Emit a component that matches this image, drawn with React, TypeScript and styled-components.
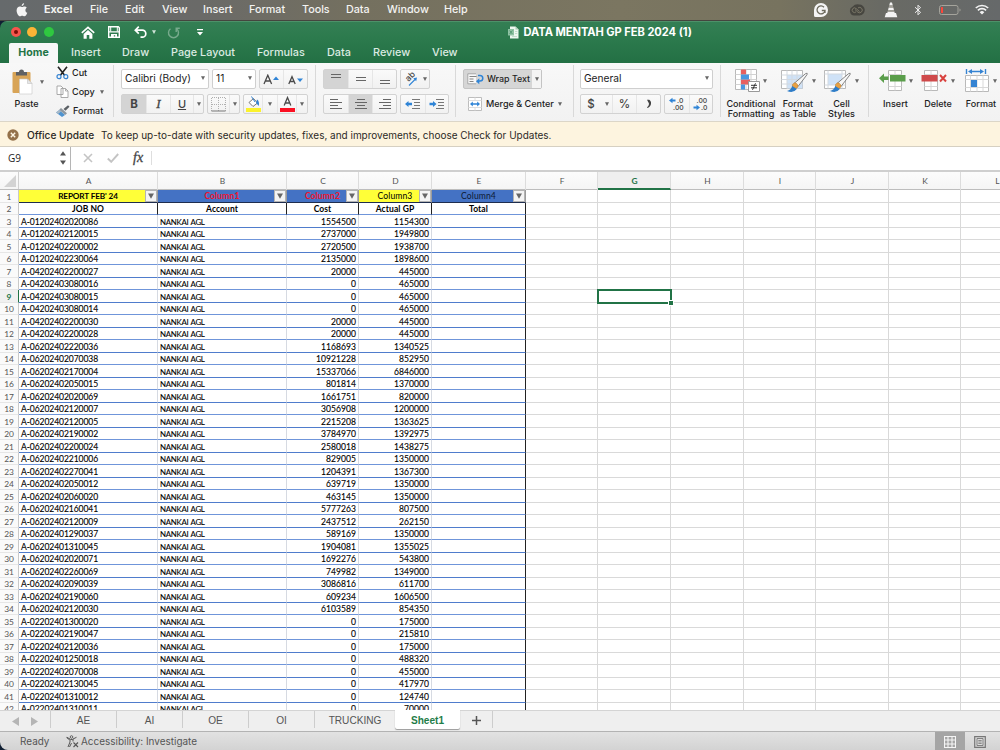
import React from "react";
import styled, { createGlobalStyle, css } from "styled-components";

const GlobalStyle = createGlobalStyle`
  * { box-sizing: border-box; }
  body { margin: 0; overflow: hidden; background: #101f33; }
  svg { display: block; flex: none; }
`;

const ui = `Inter, "Liberation Sans", sans-serif`;
const sheet = `Lato, "Open Sans", sans-serif`;

const Desktop = styled.div`
  width: 1000px;
  height: 750px;
  overflow: hidden;
  display: flex;
  flex-direction: column;
  font-family: ${ui};
  color: #1c1c1c;
  white-space: nowrap;
`;

/* ---------- system menu bar ---------- */

const MenuBar = styled.header`
  height: 21px;
  flex: none;
  display: flex;
  align-items: center;
  justify-content: space-between;
  padding: 0 11px 1px 16px;
  background: linear-gradient(90deg, #666a6c 0%, #6a6a68 20%, #74705f 36%, #7b7661 62%, #77735f 78%, #696a64 88%, #66696a 100%);
  border-bottom: 1px solid #45453f;
`;
const MenuLeft = styled.nav`
  display: flex;
  align-items: center;
`;
const MenuItem = styled.span<{ $w: number; $bold?: boolean }>`
  width: ${(p) => p.$w}px;
  font-size: 10.8px;
  letter-spacing: ${(p) => (p.$bold ? "0" : "-0.03px")};
  font-weight: ${(p) => (p.$bold ? 700 : 500)};
  color: #f3f3f1;
`;
const AppleSlot = styled.span`
  width: 28px;
`;
const MenuRight = styled.div`
  display: flex;
  align-items: center;
`;
const TrayIcon = styled.span<{ $gap: number }>`
  margin-left: ${(p) => p.$gap}px;
`;

/* ---------- window ---------- */

const Window = styled.main`
  flex: 1;
  min-height: 0;
  display: flex;
  flex-direction: column;
  border-radius: 7px 0 0 8px;
  overflow: hidden;
`;
const GreenHeader = styled.div`
  height: 42px;
  flex: none;
  background: linear-gradient(#347f54 0%, #2c7a4d 40%, #237044 100%);
  border-top: 1px solid #4d9169;
`;
const TitleRow = styled.div`
  height: 21px;
  display: flex;
  align-items: center;
  padding: 0 0 1px 10.5px;
`;
const Lights = styled.div`
  display: flex;
  gap: 6.6px;
  width: 70px;
`;
const Light = styled.span<{ $c: string }>`
  width: 10px;
  height: 10px;
  border-radius: 50%;
  background: ${(p) => p.$c};
  display: grid;
  place-items: center;
`;
const LightDot = styled.i`
  width: 4px;
  height: 4px;
  border-radius: 50%;
  background: #7d0d08;
`;
const QuickAccess = styled.div`
  display: flex;
  align-items: center;
  width: 427px;
`;
const QuickSlot = styled.span<{ $w: number }>`
  width: ${(p) => p.$w}px;
`;
const DocTitle = styled.div`
  display: flex;
  align-items: center;
  gap: 5px;
  color: #fff;
  font-size: 11.1px;
  font-weight: 700;
  letter-spacing: -0.04px;
`;
const TabRow = styled.div`
  display: flex;
  height: 20px;
  padding-left: 9px;
`;
const HomeTab = styled.span`
  width: 49px;
  height: 20px;
  margin-right: 13px;
  line-height: 19px;
  text-align: center;
  background: #f7f7f7;
  border-radius: 2px 2px 0 0;
  color: #1f7446;
  font-size: 10.6px;
  font-weight: 700;
`;
const RibbonTab = styled.span<{ $w: number }>`
  width: ${(p) => p.$w}px;
  line-height: 19px;
  font-size: 10.85px;
  font-weight: 500;
  color: #dcebe2;
`;

/* ---------- ribbon ---------- */

const Ribbon = styled.section`
  height: 58px;
  flex: none;
  display: flex;
  align-items: flex-start;
  background: linear-gradient(#f8f8f8, #f2f2f2);
  overflow: hidden;
`;
const Group = styled.div<{ $w: number; $pad: number; $last?: boolean }>`
  width: ${(p) => p.$w}px;
  flex: none;
  height: 52px;
  margin-top: 2px;
  padding: 4px 0 0 ${(p) => p.$pad}px;
  border-right: ${(p) => (p.$last ? "0" : "1px solid #d9d9d9")};
  display: flex;
`;
const Rows = styled.div`
  display: flex;
  flex-direction: column;
  align-items: flex-start;
  gap: 5px;
`;
const Line = styled.div<{ $gap?: number }>`
  display: flex;
  gap: ${(p) => p.$gap ?? 3}px;
  height: 20px;
`;
const Combo = styled.div<{ $w: number }>`
  width: ${(p) => p.$w}px;
  height: 20px;
  display: flex;
  align-items: center;
  justify-content: space-between;
  background: #fff;
  border: 1px solid #cfcfcf;
  border-radius: 2px;
  padding: 0 3px 2px 3px;
  font-size: 10.2px;
`;
const Segment = styled.div`
  display: flex;
  height: 20px;
  border: 1px solid #d2d2d2;
  border-radius: 2px;
  background: linear-gradient(#fafafa, #f1f1f1);
`;
const Cell = styled.span<{ $w: number; $on?: boolean; $plain?: boolean }>`
  width: ${(p) => p.$w}px;
  height: 18px;
  display: flex;
  align-items: center;
  justify-content: center;
  border-left: ${(p) => (p.$plain ? "0" : "1px solid #e6e6e6")};
  &:first-child { border-left: 0; }
  background: ${(p) => (p.$on ? "#d4d4d4" : "transparent")};
`;
const Glyph = styled.b<{ $kind?: "italic" | "under" | "bold" }>`
  font-size: 11.5px;
  font-weight: 500;
  color: #444;
  ${(p) => p.$kind === "bold" && css`font-weight: 700;`}
  ${(p) => p.$kind === "italic" && css`font-family: "Liberation Serif", serif; font-style: italic; font-size: 13px; -webkit-text-stroke: 0.3px #444;`}
  ${(p) => p.$kind === "under" && css`text-decoration: underline; font-size: 11px;`}
`;
const Label = styled.span`
  font-size: 9.05px;
  font-weight: 500;
  line-height: 10px;
  color: #1e1e1e;
  text-align: center;
  white-space: pre;
`;
const Paste = styled.div`
  display: flex;
  width: 44px;
  flex-direction: column;
  align-items: flex-start;
  gap: 4px;
`;
const PasteTop = styled.div`
  display: flex;
  align-items: center;
  gap: 7px;
`;
const PasteLabel = styled(Label)`
  padding-left: 2.5px;
`;
const ClipList = styled.div`
  display: flex;
  flex-direction: column;
  margin-top: -6px;
`;
const ClipItem = styled.div`
  height: 19.2px;
  flex: none;
  display: flex;
  align-items: center;
  gap: 3px;
`;
const WrapButton = styled(Segment)`
  background: #d6d6d6;
  border-color: #c4c4c4;
`;
const WrapMain = styled.span`
  width: 68px;
  display: flex;
  align-items: center;
  gap: 3px;
  padding-left: 3px;
`;
const WrapArrow = styled.span`
  width: 9px;
  display: flex;
  align-items: center;
  justify-content: center;
  background: #f4f4f4;
`;
const WrapLabel = styled(Label)`
  font-size: 8.9px;
`;
const MergeButton = styled.div`
  height: 20px;
  display: flex;
  align-items: center;
  gap: 4.5px;
  padding-left: 4.5px;
`;
const BigButton = styled.div<{ $w: number }>`
  width: ${(p) => p.$w}px;
  flex: none;
  display: flex;
  flex-direction: column;
  align-items: center;
  gap: 6px;
`;
const BigTop = styled.div`
  display: flex;
  align-items: center;
  gap: 3px;
`;

/* ---------- message + formula bars ---------- */

const UpdateBar = styled.div`
  height: 26px;
  flex: none;
  display: flex;
  align-items: center;
  padding: 1px 0 0 7px;
  background: #fdf4df;
  border-top: 1px solid #dcd6c8;
  border-bottom: 1px solid #d6d0c2;
  font-size: 9.98px;
  color: #2b2926;
`;
const UpdateName = styled.span`
  width: 74px;
  margin-left: 8px;
  font-weight: 500;
  font-size: 10.15px;
`;
const FormulaBar = styled.div`
  height: 23px;
  flex: none;
  display: flex;
  background: #fff;
`;
const NameBox = styled.div`
  width: 71px;
  display: flex;
  align-items: center;
  justify-content: space-between;
  padding: 0 4px 1px 8px;
  border-right: 1px solid #b5b5b5;
  font-family: "Open Sans", sans-serif;
  font-size: 10px;
`;
const FormulaTools = styled.div`
  display: flex;
  align-items: center;
  width: 81px;
  padding-left: 12px;
  gap: 14px;
  margin: 4px 0 5px;
  border-right: 1px solid #dedede;
`;
const Fx = styled.i`
  font-family: "Liberation Serif", serif;
  font-size: 14px;
  color: #444;
  -webkit-text-stroke: 0.3px #444;
`;

/* ---------- grid ---------- */

const GridArea = styled.section`
  height: 540px;
  flex: none;
  overflow: hidden;
  background: #fff;
  border-top: 2px solid #cfcfcf;
  font-family: ${sheet};
`;
const HeadRow = styled.div`
  display: flex;
  height: 18px;
  background: linear-gradient(#fcfcfc, #f5f5f5);
  border-bottom: 1px solid #bdbdbd;
`;
const Corner = styled.div`
  width: 19px;
  flex: none;
  border-right: 1px solid #d0d0d0;
  display: flex;
  align-items: flex-end;
  justify-content: flex-end;
  padding: 0 2px 2px 0;
`;
const HeadCell = styled.div<{ $w: number; $active?: boolean }>`
  width: ${(p) => p.$w}px;
  height: 18px;
  flex: none;
  padding-left: 1px;
  text-align: center;
  line-height: 18px;
  font-size: 8.4px;
  color: #555;
  border-right: 1px solid #dcdcdc;
  ${(p) =>
    p.$active &&
    css`
      color: #217346;
      font-weight: 700;
      background: #efefef;
      border-bottom: 2px solid #217346;
    `}
`;
const Row = styled.div<{ $tall: boolean }>`
  display: flex;
  height: ${(p) => (p.$tall ? 13 : 12)}px;
  line-height: ${(p) => (p.$tall ? 14 : 13)}px;
`;
const RowNumber = styled.div<{ $active: boolean }>`
  width: 19px;
  flex: none;
  text-align: center;
  font-size: 8.4px;
  color: ${(p) => (p.$active ? "#217346" : "#555")};
  font-weight: ${(p) => (p.$active ? 700 : 400)};
  background: ${(p) => (p.$active ? "#f0f0f0" : "#fafafa")};
  border-right: 1px solid ${(p) => (p.$active ? "#217346" : "#c9c9c9")};
  border-bottom: 1px solid #e6e6e6;
`;
const BodyCell = styled.div<{ $w: number; $right?: boolean; $edge?: boolean; $tight?: boolean; $soft: boolean }>`
  width: ${(p) => p.$w}px;
  flex: none;
  padding: 0 2px;
  text-align: ${(p) => (p.$right ? "right" : "left")};
  font-size: ${(p) => (p.$tight ? 7.9 : 8.55)}px;
  letter-spacing: ${(p) => (p.$tight ? "-0.28px" : p.$right ? "0.05px" : "-0.08px")};
  word-spacing: ${(p) => (p.$tight ? "0.5px" : "0")};
  color: #000;
  -webkit-text-stroke: 0.1px #000;
  border-right: 1px solid ${(p) => (p.$edge ? "#222" : "#d6dae2")};
  border-bottom: 1px solid ${(p) => (p.$soft ? "#6f95da" : "#4f7ccc")};
`;
const TitleCell = styled.div<{ $w: number; $bg: string; $fg: string; $bold?: boolean; $tight?: boolean }>`
  width: ${(p) => p.$w}px;
  flex: none;
  display: flex;
  background: ${(p) => p.$bg};
  color: ${(p) => p.$fg};
  font-size: ${(p) => (p.$tight ? 8.2 : 8.6)}px;
  font-weight: ${(p) => (p.$bold ? 700 : 400)};
  letter-spacing: ${(p) => (p.$tight ? "-0.12px" : "0.1px")};
  line-height: 13px;
  border-right: 1px solid #9b9b9b;
  border-bottom: 1px solid #1e2d4e;
`;
const TitleText = styled.span`
  flex: 1;
  text-align: center;
  padding-left: 12px;
`;
const FilterButton = styled.span`
  width: 12px;
  height: 12px;
  background: #f4f4f4;
  border: 1px solid #b4b4b4;
  display: grid;
  place-items: center;
`;
const SubCell = styled.div<{ $w: number }>`
  width: ${(p) => p.$w}px;
  flex: none;
  text-align: center;
  font-size: 8.5px;
  font-weight: 700;
  letter-spacing: 0.08px;
  line-height: 12px;
  color: #000;
  border-right: 1px solid #222;
  border-bottom: 1px solid #6f95da;
`;
const BlankCell = styled.div<{ $w: number }>`
  width: ${(p) => p.$w}px;
  flex: none;
  position: relative;
  border-right: 1px solid #d9d9d9;
  border-bottom: 1px solid #d9d9d9;
`;
const Selection = styled.div`
  position: absolute;
  z-index: 1;
  inset: -1px -2px -2px -1px;
  border: 2px solid #217346;
`;
const FillHandle = styled.i`
  position: absolute;
  right: -3px;
  bottom: -3px;
  width: 4px;
  height: 4px;
  background: #217346;
  outline: 1px solid #fff;
`;

/* ---------- footer ---------- */

const SheetTabs = styled.nav`
  height: 21px;
  flex: none;
  display: flex;
  background: #efefef;
  border-top: 1px solid #d4d4d4;
  font-family: "Liberation Sans", sans-serif;
  font-size: 10.1px;
  color: #555;
`;
const TabArrows = styled.div`
  width: 50px;
  display: flex;
  align-items: center;
  gap: 12px;
  padding-left: 12px;
`;
const SheetTab = styled.span<{ $w: number; $active?: boolean }>`
  width: ${(p) => p.$w}px;
  height: 17px;
  line-height: 19px;
  text-align: center;
  border-left: 1px solid #cdcdcd;
  ${(p) =>
    p.$active &&
    css`
      height: 19px;
      margin-top: -1px;
      line-height: 21px;
      background: #fff;
      color: #1f7d48;
      font-weight: 700;
      border-left: 0;
      border-radius: 0 0 2px 2px;
      box-shadow: 0 1px 1px #999;
    `}
`;
const AddTab = styled.span`
  width: 33px;
  height: 17px;
  display: grid;
  place-items: center;
  border-right: 1px solid #cdcdcd;
  padding: 2px 0 0 1px;
`;
const StatusBar = styled.footer`
  flex: 1;
  display: flex;
  align-items: center;
  border-top: 1px solid #b3b3b3;
  background: linear-gradient(#e2e2e2, #d2d2d2);
  padding-left: 20px;
  font-size: 9.95px;
  color: #555;
`;
const ReadyText = styled.span`
  width: 46px;
  padding-bottom: 1px;
`;
const Accessibility = styled.span`
  flex: 1;
  display: flex;
  align-items: center;
  gap: 2px;
  padding-bottom: 1px;
`;
const ViewButton = styled.span<{ $on?: boolean }>`
  width: 30px;
  height: 19px;
  display: grid;
  place-items: center;
  background: ${(p) => (p.$on ? "#a5a5a5" : "transparent")};
`;
const ViewButtons = styled.div`
  display: flex;
  width: 65px;
`;

/* ---------- drawings ---------- */

const Caret = ({ c = "#666", w = 4 }: { c?: string; w?: number }) => (
  <svg width={w} height={w} viewBox="0 0 4 4"><path d="M0 .3h4L2 3.9z" fill={c} /></svg>
);
const Apple = () => (
  <svg width="12" height="14" viewBox="0 0 12 14">
    <path fill="#f4f4f4" d="M8.1 0C8.2 1.5 7.100 2.900 5.700 3 5.600 1.600 6.800.3 8.100 0zM8.300 3.400c1 0 1.900.5 2.500 1.300-2.100 1.300-1.700 4.300.5 5.100-.6 1.700-1.700 3.500-2.900 3.500-.9 0-1.200-.5-2.200-.5s-1.400.5-2.200.5C2.500 13.300.6 10.300.6 7.500c0-2.700 1.700-4.100 3.300-4.100 1 0 1.800.6 2.400.6.500 0 1.300-.6 2-.6z" />
  </svg>
);
const GrammarlyIcon = () => (
  <svg width="14" height="14" viewBox="0 0 14 14">
    <path fill="#f5f5f5" d="M7 0a7 7 0 1 1 0 14H1.500A1.500 1.500 0 0 1 0 12.500V7a7 7 0 0 1 7-7z" />
    <path d="M10 4.200A4 4 0 1 0 11 7.500H7.800M11 7.500V10" fill="none" stroke="#6d6b5e" strokeWidth="1.300" />
  </svg>
);
const CloudIcon = () => (
  <svg width="16" height="12" viewBox="0 0 16 12">
    <path fill="#474640" d="M5 11.500A4.600 4.600 0 0 1 3.500 2.800 7 7 0 0 1 10 .5a5.500 5.500 0 0 1 .5 11z" />
    <path d="M10.500 7.500 7 4.500a2.300 2.300 0 1 0 0 3.400M6 5.500l3 2.800a2.700 2.700 0 1 0 0-4.400" fill="none" stroke="#7b7868" strokeWidth="1" />
  </svg>
);
const ConeIcon = () => (
  <svg width="14" height="16" viewBox="0 0 14 16">
    <path fill="#f3f3f3" d="M6 .5h2l.8 3H5.200zM4.700 5.500h4.600l.7 2.700H4zM2 11h1.300l.4-1.500h6.600l.4 1.500H12l1.300 4.300H.7z" />
    <path fill="#a3a198" d="M5.200 3.500h3.600l.5 2H4.700zM4 8.200h6l.4 1.500H3.600z" />
  </svg>
);
const BluetoothIcon = () => (
  <svg width="8" height="12" viewBox="0 0 8 12">
    <path d="M1 3.200 6.500 8.300 4 10.800V1.200l2.500 2.500L1 8.800" fill="none" stroke="#eee" strokeWidth="1" />
  </svg>
);
const BatteryIcon = () => (
  <svg width="22" height="10" viewBox="0 0 22 10">
    <rect x=".5" y=".5" width="18.500" height="9" rx="2" fill="none" stroke="#a5a49c" />
    <rect x="2" y="2" width="2" height="6" rx=".6" fill="#ff453a" />
    <path d="M20.500 3.500v3a1.600 1.600 0 0 0 0-3z" fill="#a5a49c" />
  </svg>
);
const WifiIcon = () => (
  <svg width="14" height="11" viewBox="0 0 14 11">
    <path d="M.8 4a9 9 0 0 1 12.400 0M2.900 6.300a6 6 0 0 1 8.200 0" fill="none" stroke="#f3f3f3" strokeWidth="1.700" />
    <path d="M7 10.600 4.700 8.200a3.300 3.300 0 0 1 4.600 0z" fill="#f3f3f3" />
  </svg>
);
const HomeIcon = () => (
  <svg width="14" height="13" viewBox="0 0 14 13">
    <path d="M.8 6.800 7 1.300l6.200 5.500" fill="none" stroke="#fff" strokeWidth="1.600" />
    <path d="M2.600 8 7 4.100 11.400 8v4.800H8.300V9H5.700v3.800H2.600z" fill="#fff" />
  </svg>
);
const SaveIcon = () => (
  <svg width="12" height="12" viewBox="0 0 12 12">
    <path d="M.7.700h9.600l1 1v9.600H.7z" fill="none" stroke="#fff" strokeWidth="1.400" />
    <path d="M1 5.200h10v1.300H1zM3 11.300V8h6v3.300H7.200V9.300H5.800v2z" fill="#fff" />
    <path d="M2.700 1v4.500M9.300 1v4.500" stroke="#fff" strokeWidth="1" />
  </svg>
);
const UndoIcon = () => (
  <svg width="13" height="12" viewBox="0 0 13 12">
    <path d="M4.800.7 1.300 4.200l3.500 3.500M1.300 4.200h7a3.500 3.500 0 0 1 0 7H6.500" fill="none" stroke="#fff" strokeWidth="1.700" />
  </svg>
);
const RedoIcon = () => (
  <svg width="13" height="13" viewBox="0 0 13 13">
    <path d="M3.500 2.700a5 5 0 1 0 6 0M9.200 6V2.200h3.600" fill="none" stroke="#77aa8c" strokeWidth="1.400" />
  </svg>
);
const CustomizeIcon = () => (
  <svg width="6" height="7" viewBox="0 0 6 7"><path d="M0 0h6v1.300H0zM0 3h6L3 6.500z" fill="#fff" /></svg>
);
const DocIcon = () => (
  <svg width="11" height="13" viewBox="0 0 11 13">
    <path d="M2 .5h5.500L10.500 3.500v9H2z" fill="#eef6f0" />
    <path d="M7.500.5v3h3z" fill="#a9cdb6" />
    <rect x="0" y="3" width="6" height="6.500" fill="#8fc2a3" />
    <path d="m1.600 4.500 2.800 3.500M4.400 4.500 1.600 8" stroke="#4a9069" strokeWidth=".8" />
    <path d="M7 5.500h2.300M7 7.500h2.300M4 10.500h5" stroke="#b7d8c3" strokeWidth=".8" />
  </svg>
);
const PasteIcon = () => (
  <svg width="21" height="26" viewBox="0 0 21 26">
    <rect x=".5" y="3" width="18" height="21" rx="1" fill="#d8a457" />
    <path d="M4 3h3a2.500 2.500 0 0 1 5 0h3v3.500H4z" fill="#5f6164" />
    <path d="M7.500 10h8l4.500 4.500V25H7.500z" fill="#fff" stroke="#c8c8c8" strokeWidth=".6" />
    <path d="M15.500 10v4.500H20z" fill="#e6e6e6" stroke="#bbb" strokeWidth=".5" />
  </svg>
);
const CutIcon = () => (
  <svg width="13" height="14" viewBox="0 0 13 14">
    <path d="m2 .8 6.600 8.500M11 .8 4.400 9.300" stroke="#222" strokeWidth="1.600" />
    <circle cx="3" cy="10.700" r="2" fill="none" stroke="#3583d2" strokeWidth="1.200" />
    <circle cx="9.800" cy="10.700" r="2" fill="none" stroke="#3583d2" strokeWidth="1.200" />
  </svg>
);
const CopyIcon = () => (
  <svg width="13" height="13" viewBox="0 0 13 13">
    <path d="M1 1h4l2 2v6.500H1zM5 3.500h4.500L12 6v6.500H5z" fill="#fff" stroke="#a0a0a0" strokeWidth=".9" />
    <path d="M9.500 3.500V6H12" fill="none" stroke="#a0a0a0" strokeWidth=".8" />
  </svg>
);
const BrushIcon = () => (
  <svg width="14" height="12" viewBox="0 0 14 12">
    <path d="M7.500 4 12 .3l1.500 1.500-4 4z" fill="#5b6065" />
    <path d="m5 3 6 5.300-1.800 1.700-6-5.300z" fill="#8f979e" />
    <path d="M3.300 4.900 9 10l-3 2L0 7.500z" fill="#4f93cf" />
    <path d="M3.300 4.900 5 6.400 2 9 0 7.500z" fill="#a9bac8" />
  </svg>
);
const SizeIcon = ({ up }: { up: boolean }) => (
  <svg width="17" height="11" viewBox="0 0 17 11">
    <path d={up ? "M1 10 4.800 1.200 8.600 10M2.300 7h5" : "M1.800 10 5 2.700 8.200 10M2.900 7.500h4.200"} fill="none" stroke="#4a4a4a" strokeWidth="1.300" />
    <path d={up ? "M10 6h6l-3-3.500z" : "M10 4.500h6L13 8z"} fill="#2f84d6" />
  </svg>
);
const BorderIcon = () => (
  <svg width="15" height="15" viewBox="0 0 15 15">
    <path d="M1 .5h13M.5 1v13M14.500 1v13M7.500 1v13M1 7.500h13" fill="none" stroke="#b0b0b0" strokeDasharray="1 1" />
    <path d="M.5 14h14" stroke="#777" strokeWidth="1.200" />
  </svg>
);
const FillIcon = () => (
  <svg width="15" height="16" viewBox="0 0 15 16">
    <path d="m3 6.500 4.500-4 4 4.500-4.500 3.500z" fill="#fff" stroke="#666" strokeWidth=".9" />
    <path d="M5.500.5 9 6" stroke="#3583d2" strokeWidth="1" />
    <path d="M11 3.500c2 1 2.300 4 1.800 6.500L10 7z" fill="#3583d2" />
    <rect y="12" width="15" height="4" fill="#fbf22c" />
  </svg>
);
const FontColorIcon = () => (
  <svg width="15" height="16" viewBox="0 0 15 16">
    <path d="M4.200 9.500 7.500 1.500l3.300 8M5.200 7h4.600" fill="none" stroke="#4a4a4a" strokeWidth="1.300" />
    <rect y="12" width="15" height="4" fill="#fb1022" />
  </svg>
);
const Lines = ({ rows }: { rows: [number, number, number][] }) => (
  <svg width="14" height="14" viewBox="0 0 14 14" shapeRendering="crispEdges">
    {rows.map(([x, y, w]) => <rect key={y} x={x} y={y} width={w} height="1" fill="#666" />)}
  </svg>
);
const OrientIcon = () => (
  <svg width="16" height="16" viewBox="0 0 16 16" overflow="visible">
    <text fontSize="8.500" fontFamily="Inter" fontWeight="500" fill="#444" transform="translate(5.500 11) rotate(-45)">ab</text>
    <path d="M6 14.500 12.500 8" stroke="#2f84d6" strokeWidth="1.100" />
    <path d="M14 6.500l-.8 3.700-2.900-2.900z" fill="#2f84d6" />
  </svg>
);
const IndentIcon = ({ out }: { out: boolean }) => (
  <svg width="16" height="12" viewBox="0 0 16 12">
    <path d="M7 1.500h8M9 4.500h6M9 7.500h6M7 10.500h8" stroke="#777" />
    <path d={out ? "M0 6l3.500-3v1.800H7v2.400H3.500V9z" : "M7.500 6 4 3v1.800H.5v2.400H4V9z"} fill="#2f84d6" />
  </svg>
);
const WrapIcon = () => (
  <svg width="17" height="12" viewBox="0 0 17 12">
    <path d="M9 .8H.8v10H9" fill="#f8f8f8" stroke="#999" strokeWidth=".8" />
    <path d="M2.500 3.500h7M2.500 6h4M2.500 8.500h4" stroke="#777" strokeWidth=".9" />
    <path d="M11 2.500h2a2.700 2.700 0 0 1 0 5.600h-1" fill="none" stroke="#2f84d6" strokeWidth="1.500" />
    <path d="m9 8.200 3.300-3v6z" fill="#2f84d6" />
  </svg>
);
const MergeIcon = () => (
  <svg width="14" height="14" viewBox="0 0 14 14">
    <path d="M.5.5h13v13H.5z" fill="#fff" stroke="#bdbdbd" />
    <path d="M.5 3.500h13M.5 10.500h13M7 .5v3M7 10.500v3" stroke="#dedede" />
    <path d="M2 7l2.800-2.400v1.700h4.400V4.600L12 7 9.200 9.400V7.700H4.800v1.700z" fill="#2f84d6" />
  </svg>
);
const DecimalIcon = ({ inc }: { inc: boolean }) => (
  <svg width="17" height="16" viewBox="0 0 17 16">
    <text x={inc ? 8 : 3.500} y="7" fontSize="6.800" fontFamily="Inter" fontWeight="500" fill="#444">{inc ? ".0" : ".00"}</text>
    <text x={inc ? 4 : 8} y="14" fontSize="6.800" fontFamily="Inter" fontWeight="500" fill="#444">{inc ? ".00" : ".0"}</text>
    <path d={inc ? "M0 4.500 3.500 1.700v1.700h3v2.200h-3v1.700z" : "M7 11.500 3.500 8.700v1.700h-3v2.200h3v1.700z"} fill="#2f84d6" />
  </svg>
);
const CommaIcon = () => (
  <svg width="6" height="10" viewBox="0 0 6 10"><path d="M1 .8h2.200c3 1.700 2.300 6.700-1.700 8.200L1 8.200C3 7 3.300 5 2.600 3.800z" fill="#444" /></svg>
);
const ConditionalIcon = () => (
  <svg width="25" height="24" viewBox="0 0 25 24">
    <path d="M.5.5h21v20H.5z" fill="#fff" stroke="#b9b9b9" />
    <path d="M.5 5.500h21M.5 10.500h21M.5 15.500h21M6 .5v20M11 .5v20M16 .5v20" stroke="#d2d2d2" />
    <path d="M6 .5h5v5H6zM6 10.500h9v5H6z" fill="#e8605f" />
    <path d="M6 5.500h8v5H6zM6 15.500h4v5H6z" fill="#4a97e0" />
    <path d="M13.500 12.500h11v10h-11z" fill="#fff" stroke="#999" />
    <path d="M16 16.300h6M16 18.800h6M20.500 14.300l-3 6.500" stroke="#333" strokeWidth="1" />
  </svg>
);
const BrushTableIcon = ({ single }: { single?: boolean }) => (
  <svg width="28" height="24" viewBox="0 0 28 24">
    <path d="M.5 1.500h21v18H.5z" fill="#fff" stroke="#b9b9b9" />
    <path d={single ? "M4 5h14v11H4z" : "M6 6h15.500v13.500H6z"} fill="#cfe2f7" />
    <path d={single ? "M4 1.500v18M18 1.500v18M.5 5h21M.5 16h21" : "M6 1.500v18M11 1.500v18M16 1.500v18M.5 6h21M.5 10.500h21M.5 15h21"} stroke="#d3d9e0" />
    <path d="M13 14.500 24.500 4.700q2.500-1.500 1.500 1L17 17.500z" fill="#f6f6f6" stroke="#777" strokeWidth=".9" />
    <path d="M11.500 15.500q2.500-3.500 5 0 1.500 2-1 4l-4-1z" fill="#e7a145" stroke="#b5792c" strokeWidth=".5" />
    <path d="M11.200 17q-1 4-5.200 5 6.500 2.500 9.800-2z" fill="#2e7dc8" />
  </svg>
);
const RowIcon = ({ del }: { del?: boolean }) => (
  <svg width="27" height="24" viewBox="0 0 27 24">
    <path d="M9.500 1.500h13v20h-13z" fill="#fff" stroke="#b9b9b9" transform={del ? "translate(-6 0)" : undefined} />
    <path d="M16 1.500v20M9.500 17.500h13M9.500 5.500h13" stroke="#d6d6d6" transform={del ? "translate(-6 0)" : undefined} />
    {del ? (
      <>
        <path d="M.5 6h16v6.500H.5z" fill="#cf4a4b" />
        <path d="m19 6 6 6.500M25 6l-6 6.500" stroke="#d9433f" strokeWidth="2" />
      </>
    ) : (
      <>
        <path d="M11 6h15.500v6.500H11z" fill="#5a9e4b" />
        <path d="M0 9.200 5 4.500v3h4.500V11H5v3z" fill="#5a9e4b" />
      </>
    )}
  </svg>
);
const FormatIcon = () => (
  <svg width="25" height="24" viewBox="0 0 25 24">
    <path d="M1.500 0v5M20.500 0v5" stroke="#3583d2" strokeWidth="1.400" />
    <path d="M3 2.500 7 0v1.700h8V0l4 2.500L15 5V3.300H7V5z" fill="#3583d2" />
    <path d="M.5 6.500h23v16H.5z" fill="#fff" stroke="#b9b9b9" />
    <path d="M5.500 6.500v16M12 6.500v16M18 6.500v16M.5 10.500h23M.5 18.500h23" stroke="#d9d9d9" />
    <path d="M6 11h6v7H6z" fill="#3583d2" />
  </svg>
);
const CloseBadge = () => (
  <svg width="12" height="12" viewBox="0 0 12 12">
    <circle cx="6" cy="6" r="5.700" fill="#94714a" />
    <path d="m3.800 3.800 4.400 4.400M8.200 3.800 3.800 8.200" stroke="#fff6e4" strokeWidth="1.400" />
  </svg>
);
const Stepper = () => (
  <svg width="6" height="14" viewBox="0 0 6 14"><path d="M0 4.500h6L3 .3zM0 9.500h6L3 13.700z" fill="#555" /></svg>
);
const CancelIcon = () => (
  <svg width="10" height="10" viewBox="0 0 10 10"><path d="m1 1 8 8M9 1 1 9" stroke="#c4c4c4" strokeWidth="1.600" /></svg>
);
const CheckIcon = () => (
  <svg width="12" height="10" viewBox="0 0 12 10"><path d="m.8 5.500 3.400 3.300L11.200 1" fill="none" stroke="#c4c4c4" strokeWidth="1.900" /></svg>
);
const AccessIcon = () => (
  <svg width="13" height="13" viewBox="0 0 13 13">
    <circle cx="5.500" cy="2" r="1.300" fill="none" stroke="#555" strokeWidth=".9" />
    <path d="M.8 2.300 4 4v3L2 12M10.500 2.300 7 4v2.500M4.500 4.500h2.200M3.500 12l2-4M.8 2.300l.5 1 2 1.200" fill="none" stroke="#555" strokeWidth="1" />
    <path d="m7.500 7.500 4.500 4.500M12 7.500 7.500 12" stroke="#555" strokeWidth="1.100" />
  </svg>
);
const NormalViewIcon = () => (
  <svg width="12" height="12" viewBox="0 0 12 12">
    <path d="M.5.500h11v11H.5zM4 .5v11M8 .5v11M.5 4h11M.5 8h11" fill="none" stroke="#f5f5f5" strokeWidth="1.100" />
  </svg>
);
const PageViewIcon = () => (
  <svg width="12" height="12" viewBox="0 0 12 12">
    <path d="M.7.700h10.600v10.600H.7z" fill="none" stroke="#777" strokeWidth="1.200" />
    <path d="M3 2.500h6v7H3z" fill="#ddd" stroke="#777" strokeWidth=".9" />
    <path d="M4.300 4.500h3.400M4.300 6h3.400M4.300 7.500h3.400" stroke="#777" strokeWidth=".8" />
  </svg>
);

/* ---------- data ---------- */

const menus: [string, number][] = [["File", 35], ["Edit", 37], ["View", 41], ["Insert", 46], ["Format", 53], ["Tools", 44], ["Data", 41], ["Window", 57], ["Help", 40]];
const tabs: [string, number][] = [["Insert", 51], ["Draw", 49], ["Page Layout", 86], ["Formulas", 70], ["Data", 46], ["Review", 59], ["View", 40]];
const cols: [string, number][] = [["A", 139], ["B", 129], ["C", 72], ["D", 73], ["E", 94], ["F", 72], ["G", 73], ["H", 73], ["I", 72], ["J", 73], ["K", 72], ["L", 73]];

const records: [string, number, number][] = [
  ["A-01202402020086", 1554500, 1154300], ["A-01202402120015", 2737000, 1949800], ["A-01202402200002", 2720500, 1938700],
  ["A-01202402230064", 2135000, 1898600], ["A-04202402200027", 20000, 445000], ["A-04202403080016", 0, 465000],
  ["A-04202403080015", 0, 465000], ["A-04202403080014", 0, 465000], ["A-04202402200030", 20000, 445000],
  ["A-04202402200028", 20000, 445000], ["A-06202402220036", 1168693, 1340525], ["A-06202402070038", 10921228, 852950],
  ["A-06202402170004", 15337066, 6846000], ["A-06202402050015", 801814, 1370000], ["A-06202402020069", 1661751, 820000],
  ["A-06202402120007", 3056908, 1200000], ["A-06202402120005", 2215208, 1363625], ["A-06202402190002", 3784970, 1392975],
  ["A-06202402200024", 2580018, 1438275], ["A-06202402210006", 829005, 1350000], ["A-06202402270041", 1204391, 1367300],
  ["A-06202402050012", 639719, 1350000], ["A-06202402060020", 463145, 1350000], ["A-06202402160041", 5777263, 807500],
  ["A-06202402120009", 2437512, 262150], ["A-06202401290037", 589169, 1350000], ["A-06202401310045", 1904081, 1355025],
  ["A-06202402020071", 1692276, 543800], ["A-06202402260069", 749982, 1349000], ["A-06202402090039", 3086816, 611700],
  ["A-06202402190060", 609234, 1606500], ["A-06202402120030", 6103589, 854350], ["A-02202401300020", 0, 175000],
  ["A-02202402190047", 0, 215810], ["A-02202402120036", 0, 175000], ["A-02202401250018", 0, 488320],
  ["A-02202402070008", 0, 455000], ["A-02202402130045", 0, 417970], ["A-02202401310012", 0, 124740],
  ["A-02202401310011", 0, 70000],
];
const BLUE = "#4472c4";
const YELLOW = "#ffff38";
const titles: [string, string, string, boolean][] = [
  ["REPORT FEB' 24", YELLOW, "#000", true], ["Column1", BLUE, "#f0142d", true], ["Column2", BLUE, "#f0142d", true],
  ["Column3", YELLOW, "#000", false], ["Column4", BLUE, "#0d1a33", false],
];
const subtitles = ["JOB NO", "Account", "Cost", "Actual GP", "Total"];

const Blanks = ({ row }: { row: number }) => (
  <>
    {cols.slice(5).map(([name, w]) => (
      <BlankCell key={name} $w={w}>
        {name === "G" && row === 9 && <Selection><FillHandle /></Selection>}
      </BlankCell>
    ))}
  </>
);

export default function App() {
  return (
    <Desktop>
      <GlobalStyle />
      <MenuBar>
        <MenuLeft>
          <AppleSlot><Apple /></AppleSlot>
          <MenuItem $w={46} $bold>Excel</MenuItem>
          {menus.map(([m, w]) => <MenuItem key={m} $w={w}>{m}</MenuItem>)}
        </MenuLeft>
        <MenuRight>
          <TrayIcon $gap={0}><GrammarlyIcon /></TrayIcon>
          <TrayIcon $gap={21}><CloudIcon /></TrayIcon>
          <TrayIcon $gap={19}><ConeIcon /></TrayIcon>
          <TrayIcon $gap={16}><BluetoothIcon /></TrayIcon>
          <TrayIcon $gap={17}><BatteryIcon /></TrayIcon>
          <TrayIcon $gap={14}><WifiIcon /></TrayIcon>
        </MenuRight>
      </MenuBar>
      <Window>
        <GreenHeader>
          <TitleRow>
            <Lights>
              <Light $c="#f8544c"><LightDot /></Light>
              <Light $c="#fbb436" />
              <Light $c="#2fc840" />
            </Lights>
            <QuickAccess>
              <QuickSlot $w={27}><HomeIcon /></QuickSlot>
              <QuickSlot $w={26}><SaveIcon /></QuickSlot>
              <QuickSlot $w={18}><UndoIcon /></QuickSlot>
              <QuickSlot $w={15}><Caret c="#cfe3d7" /></QuickSlot>
              <QuickSlot $w={30}><RedoIcon /></QuickSlot>
              <QuickSlot $w={10}><CustomizeIcon /></QuickSlot>
            </QuickAccess>
            <DocTitle><DocIcon />DATA MENTAH GP FEB 2024 (1)</DocTitle>
          </TitleRow>
          <TabRow>
            <HomeTab>Home</HomeTab>
            {tabs.map(([t, w]) => <RibbonTab key={t} $w={w}>{t}</RibbonTab>)}
          </TabRow>
        </GreenHeader>

        <Ribbon>
          <Group $w={114} $pad={12}>
            <Paste>
              <PasteTop><PasteIcon /><Caret /></PasteTop>
              <PasteLabel>Paste</PasteLabel>
            </Paste>
            <ClipList>
              <ClipItem><CutIcon /><Label>Cut</Label></ClipItem>
              <ClipItem><CopyIcon /><Label>Copy </Label><Caret /></ClipItem>
              <ClipItem><BrushIcon /><Label>Format</Label></ClipItem>
            </ClipList>
          </Group>

          <Group $w={202} $pad={7}>
            <Rows>
              <Line>
                <Combo $w={88}>Calibri (Body)<Caret /></Combo>
                <Combo $w={44}>11<Caret /></Combo>
                <Segment><Cell $w={23}><SizeIcon up /></Cell><Cell $w={24}><SizeIcon up={false} /></Cell></Segment>
              </Line>
              <Line>
                <Segment>
                  <Cell $w={24} $on><Glyph $kind="bold">B</Glyph></Cell>
                  <Cell $w={24}><Glyph $kind="italic">I</Glyph></Cell>
                  <Cell $w={23}><Glyph $kind="under">U</Glyph></Cell>
                  <Cell $w={10}><Caret /></Cell>
                </Segment>
                <Segment><Cell $w={21}><BorderIcon /></Cell><Cell $w={10}><Caret /></Cell></Segment>
                <Segment>
                  <Cell $w={18}><FillIcon /></Cell><Cell $w={15}><Caret /></Cell>
                  <Cell $w={19}><FontColorIcon /></Cell><Cell $w={11}><Caret /></Cell>
                </Segment>
              </Line>
            </Rows>
          </Group>

          <Group $w={140} $pad={7}>
            <Rows>
              <Line>
                <Segment>
                  <Cell $w={24} $on><Lines rows={[[2, 2, 10], [2, 5, 10]]} /></Cell>
                  <Cell $w={24}><Lines rows={[[2, 5, 10], [2, 8, 10]]} /></Cell>
                  <Cell $w={24}><Lines rows={[[2, 8, 10], [2, 11, 10]]} /></Cell>
                </Segment>
                <Segment><Cell $w={19}><OrientIcon /></Cell><Cell $w={9} $plain><Caret /></Cell></Segment>
              </Line>
              <Line>
                <Segment>
                  <Cell $w={24}><Lines rows={[[1, 2, 8], [1, 5, 12], [1, 8, 8], [1, 11, 12]]} /></Cell>
                  <Cell $w={24} $on><Lines rows={[[3, 2, 8], [1, 5, 12], [3, 8, 8], [1, 11, 12]]} /></Cell>
                  <Cell $w={24}><Lines rows={[[5, 2, 8], [1, 5, 12], [5, 8, 8], [1, 11, 12]]} /></Cell>
                </Segment>
                <Segment><Cell $w={24}><IndentIcon out /></Cell><Cell $w={23}><IndentIcon out={false} /></Cell></Segment>
              </Line>
            </Rows>
          </Group>

          <Group $w={118} $pad={7}>
            <Rows>
              <WrapButton>
                <WrapMain><WrapIcon /><WrapLabel>Wrap Text</WrapLabel></WrapMain>
                <WrapArrow><Caret /></WrapArrow>
              </WrapButton>
              <MergeButton><MergeIcon /><Label>Merge &amp; Center</Label><Caret /></MergeButton>
            </Rows>
          </Group>

          <Group $w={147} $pad={6}>
            <Rows>
              <Combo $w={133}>General<Caret /></Combo>
              <Line>
                <Segment>
                  <Cell $w={20}><Glyph>$</Glyph></Cell><Cell $w={11} $plain><Caret /></Cell>
                  <Cell $w={24}><Glyph>%</Glyph></Cell><Cell $w={24}><CommaIcon /></Cell>
                </Segment>
                <Segment><Cell $w={24}><DecimalIcon inc /></Cell><Cell $w={23}><DecimalIcon inc={false} /></Cell></Segment>
              </Line>
            </Rows>
          </Group>

          <Group $w={148} $pad={6}>
            <BigButton $w={48}><BigTop><ConditionalIcon /><Caret /></BigTop><Label>{"Conditional\nFormatting"}</Label></BigButton>
            <BigButton $w={46}><BigTop><BrushTableIcon /><Caret /></BigTop><Label>{"Format\nas Table"}</Label></BigButton>
            <BigButton $w={41}><BigTop><BrushTableIcon single /><Caret /></BigTop><Label>{"Cell\nStyles"}</Label></BigButton>
          </Group>

          <Group $w={140} $pad={6} $last>
            <BigButton $w={41}><BigTop><RowIcon /><Caret /></BigTop><Label>Insert</Label></BigButton>
            <BigButton $w={44}><BigTop><RowIcon del /><Caret /></BigTop><Label>Delete</Label></BigButton>
            <BigButton $w={42}><BigTop><FormatIcon /><Caret /></BigTop><Label>Format</Label></BigButton>
          </Group>
        </Ribbon>

        <UpdateBar>
          <CloseBadge />
          <UpdateName>Office Update</UpdateName>
          <span>To keep up-to-date with security updates, fixes, and improvements, choose Check for Updates.</span>
        </UpdateBar>

        <FormulaBar>
          <NameBox>G9<Stepper /></NameBox>
          <FormulaTools><CancelIcon /><CheckIcon /><Fx>fx</Fx></FormulaTools>
        </FormulaBar>

        <GridArea>
          <HeadRow>
            <Corner><svg width="12" height="12"><path d="M12 0v12H0z" fill="#d3d3d3" /></svg></Corner>
            {cols.map(([c, w]) => <HeadCell key={c} $w={w} $active={c === "G"}>{c}</HeadCell>)}
          </HeadRow>
          <Row $tall>
            <RowNumber $active={false}>1</RowNumber>
            {titles.map(([t, bg, fg, bold], i) => (
              <TitleCell key={t} $w={cols[i][1]} $bg={bg} $fg={fg} $bold={bold} $tight={i === 0}>
                <TitleText>{t}</TitleText>
                <FilterButton><Caret w={6} /></FilterButton>
              </TitleCell>
            ))}
            <Blanks row={1} />
          </Row>
          <Row $tall={false}>
            <RowNumber $active={false}>2</RowNumber>
            {subtitles.map((t, i) => <SubCell key={t} $w={cols[i][1]}>{t}</SubCell>)}
            <Blanks row={2} />
          </Row>
          {records.map(([job, cost, gp], i) => {
            const n = i + 3;
            const soft = n % 2 === 0;
            return (
              <Row key={job} $tall={!soft}>
                <RowNumber $active={n === 9}>{n}</RowNumber>
                <BodyCell $w={139} $soft={soft}>{job}</BodyCell>
                <BodyCell $w={129} $soft={soft} $tight>NANKAI AGL</BodyCell>
                <BodyCell $w={72} $soft={soft} $right>{cost}</BodyCell>
                <BodyCell $w={73} $soft={soft} $right>{gp}</BodyCell>
                <BodyCell $w={94} $soft={soft} $edge />
                <Blanks row={n} />
              </Row>
            );
          })}
        </GridArea>

        <SheetTabs>
          <TabArrows>
            <svg width="7" height="9"><path d="M7 0v9L0 4.500z" fill="#b5b5b5" /></svg>
            <svg width="7" height="9"><path d="M0 0v9l7-4.500z" fill="#b5b5b5" /></svg>
          </TabArrows>
          <SheetTab $w={66}>AE</SheetTab>
          <SheetTab $w={66}>AI</SheetTab>
          <SheetTab $w={66}>OE</SheetTab>
          <SheetTab $w={66}>OI</SheetTab>
          <SheetTab $w={81}>TRUCKING</SheetTab>
          <SheetTab $w={65} $active>Sheet1</SheetTab>
          <AddTab><svg width="9" height="9"><path d="M4.500 0v9M0 4.500h9" stroke="#555" strokeWidth="1.500" /></svg></AddTab>
        </SheetTabs>
        <StatusBar>
          <ReadyText>Ready</ReadyText>
          <Accessibility><AccessIcon />Accessibility: Investigate</Accessibility>
          <ViewButtons>
            <ViewButton $on><NormalViewIcon /></ViewButton>
            <ViewButton><PageViewIcon /></ViewButton>
          </ViewButtons>
        </StatusBar>
      </Window>
    </Desktop>
  );
}
